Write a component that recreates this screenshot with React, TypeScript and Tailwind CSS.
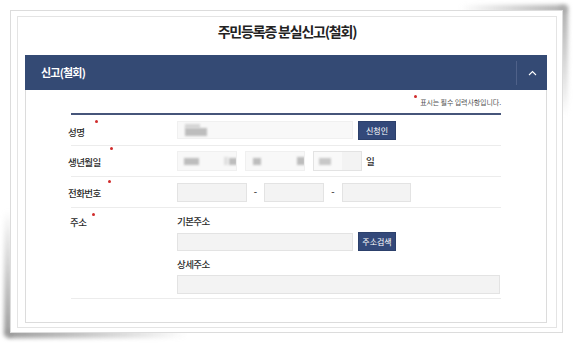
import React from "react";

function Req({ left, top }: { left: number; top: number }) {
  return (
    <span
      className="absolute w-[3px] h-[3px] rounded-full bg-[#d02b2b]"
      style={{ left, top }}
    />
  );
}

function Box({
  w,
  h,
  light,
  children,
}: {
  w: string;
  h: string;
  light?: boolean;
  children?: React.ReactNode;
}) {
  return (
    <div
      className={`relative ${w} ${h} border ${
        light ? "bg-[#f8f8f8] border-[#f0f0f0]" : "bg-[#f3f3f3] border-[#e3e3e3]"
      } overflow-hidden`}
    >
      {children}
    </div>
  );
}

function Blob({ x, y, w, h, c = "#bdbdbd" }: { x: number; y: number; w: number; h: number; c?: string }) {
  return (
    <span
      className="absolute blur-[1px]"
      style={{ left: x, top: y, width: w, height: h, background: c }}
    />
  );
}

export default function App() {
  return (
    <div className="relative w-[574px] h-[345px] bg-white overflow-hidden font-['Noto_Sans_CJK_KR','Noto_Sans',sans-serif] text-[#2a2a2a]">
      {/* page-curl shadows */}
      <div className="absolute left-[460px] top-[5px] w-[106px] h-[7px] bg-linear-to-r from-transparent to-[#aaaaaa] blur-[2px]" />
      <div className="absolute left-[560px] top-[6px] w-[8px] h-[110px] bg-linear-to-b from-[#aaaaaa] to-transparent blur-[2px]" />
      <div className="absolute left-[7px] top-[330px] w-[180px] h-[8px] bg-linear-to-r from-[#999999] to-transparent blur-[2px]" />
      <div className="absolute left-[4px] top-[210px] w-[8px] h-[126px] bg-linear-to-b from-transparent to-[#999999] blur-[2px]" />

      <div className="relative pl-[10px] pt-[10px]">
        <div className="w-[553px] h-[323px] border border-[#dcdcdc] bg-white pt-[5px] pl-[6px] pr-[5px] pb-[4px]">
          <div className="w-[540px] h-[312px] border border-[#e4e4e4] flex flex-col">
            {/* title */}
            <div className="h-[38px] pt-[4px] text-center text-[14px] leading-[20px] font-bold tracking-[-1.2px] text-[#222]">
              주민등록증 분실신고(철회)
            </div>

            {/* panel */}
            <div className="ml-[7px] w-[522px] h-[268px] flex flex-col">
              <div className="h-[35px] bg-[#344a74] flex items-center justify-between">
                <span className="pl-[16px] text-white font-bold text-[11px] tracking-[-0.8px]">
                  신고(철회)
                </span>
                <div className="w-[31px] h-[24px] border-l border-[#4f6189] flex items-center justify-center">
                  <svg width="9" height="6" viewBox="0 0 9 6" className="ml-[1px]">
                    <path d="M1 5 L4.5 1.5 L8 5" stroke="#ffffff" strokeWidth="1.1" fill="none" />
                  </svg>
                </div>
              </div>

              <div className="flex-1 border-x border-b border-[#dcdcdc] pl-[42px] pr-[45px]">
                {/* notice */}
                <div className="pt-[7px] h-[23px] flex justify-end">
                  <div className="relative text-[7px] leading-[10px] text-[#555] tracking-[-0.1px]">
                    <span className="absolute -left-[6px] -top-[2px] w-[3px] h-[3px] rounded-full bg-[#d02b2b]" />
                    표시는 필수 입력사항입니다.
                  </div>
                </div>
                <div className="ml-[3px] h-[2px] bg-[#46557a]" />

                {/* row 1 */}
                <div className="ml-[3px] h-[31px] border-b border-[#ececec] flex items-center">
                  <div className="relative -ml-[3px] w-[109px] text-[9.5px] font-medium leading-[12px] tracking-[-0.6px] mt-[3px]">
                    성명
                    <Req left={27} top={-6} />
                  </div>
                  <Box w="w-[176px]" h="h-[18px]" light>
                    <Blob x={7} y={2} w={15} h={4} c="#d5d5d5" />
                    <Blob x={7} y={6} w={22} h={8} />
                  </Box>
                  <button className="ml-[5px] w-[38px] h-[19px] bg-[#33497a] border border-[#2c406b] text-white text-[8px] leading-[17px] tracking-[0px]">
                    신청인
                  </button>
                </div>

                {/* row 2 */}
                <div className="ml-[3px] h-[31px] border-b border-[#ececec] flex items-center">
                  <div className="relative -ml-[3px] w-[109px] text-[9.5px] font-medium leading-[12px] tracking-[-0.6px] mt-[2px]">
                    생년월일
                    <Req left={42} top={-9} />
                  </div>
                  <Box w="w-[60px]" h="h-[20px]" light>
                    <Blob x={6} y={6} w={15} h={7} />
                    <Blob x={46} y={5} w={4} h={8} c="#e0e0e0" />
                    <Blob x={51} y={6} w={8} h={7} />
                  </Box>
                  <div className="ml-[8px]">
                    <Box w="w-[60px]" h="h-[20px]" light>
                      <Blob x={7} y={6} w={8} h={7} />
                      <Blob x={51} y={5} w={8} h={8} />
                    </Box>
                  </div>
                  <div className="ml-[8px]">
                    <Box w="w-[49px]" h="h-[20px]">
                      <span className="absolute left-0 top-0 w-[28px] h-full bg-[#f9f9f9]" />
                      <Blob x={5} y={6} w={12} h={7} c="#c8c8c8" />
                    </Box>
                  </div>
                  <span className="ml-[4px] text-[9.5px] font-medium leading-[12px]">일</span>
                </div>

                {/* row 3 */}
                <div className="ml-[3px] h-[31px] border-b border-[#ececec] flex items-center">
                  <div className="relative -ml-[3px] w-[109px] text-[9.5px] font-medium leading-[12px] tracking-[-0.6px] mt-[1px]">
                    전화번호
                    <Req left={40} top={-7} />
                  </div>
                  <Box w="w-[70px]" h="h-[19px]" />
                  <span className="w-[17px] text-center text-[9px] font-bold leading-[12px] text-[#555]">-</span>
                  <Box w="w-[60px]" h="h-[19px]" />
                  <span className="w-[18px] text-center text-[9px] font-bold leading-[12px] text-[#555]">-</span>
                  <Box w="w-[69px]" h="h-[19px]" />
                </div>

                {/* row 4 */}
                <div className="ml-[3px] h-[91px] border-b border-[#ececec] flex items-start">
                  <div className="relative -ml-[1px] w-[107px] pt-[8px] text-[9.5px] font-medium leading-[12px] tracking-[-0.6px]">
                    주소
                    <Req left={22} top={5} />
                  </div>
                  <div className="flex flex-col">
                    <div className="pt-[7px] text-[9.5px] font-medium leading-[12px] tracking-[-0.6px]">기본주소</div>
                    <div className="mt-[5px] flex items-center">
                      <Box w="w-[176px]" h="h-[18px]" />
                      <button className="ml-[5px] w-[38px] h-[19px] bg-[#33497a] border border-[#2c406b] text-white text-[8px] leading-[17px] tracking-[0px]">
                        주소검색
                      </button>
                    </div>
                    <div className="mt-[7px] text-[9.5px] font-medium leading-[12px] tracking-[-0.6px]">상세주소</div>
                    <div className="mt-[5px]">
                      <Box w="w-[323px]" h="h-[19px]" />
                    </div>
                  </div>
                </div>
              </div>
            </div>
          </div>
        </div>
      </div>
    </div>
  );
}
